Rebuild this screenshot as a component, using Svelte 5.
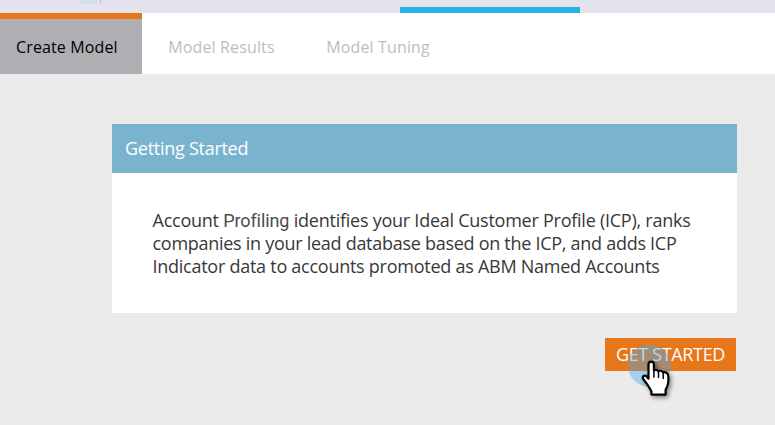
<script>
  const tabs = [
    { label: 'Create Model', active: true },
    { label: 'Model Results', active: false },
    { label: 'Model Tuning', active: false }
  ];
</script>

<div class="page">
  <header class="topbar">
    <span class="fragment"></span>
    <span class="caret"></span>
    <span class="indicator"></span>
  </header>
  <nav class="tabs">
    {#each tabs as tab}
      <a class="tab" class:active={tab.active}>{tab.label}</a>
    {/each}
  </nav>
  <main>
    <section class="card">
      <h2>Getting Started</h2>
      <p>
        <span class="line one">Account <span class="alt">Profiling</span> identifies your Ideal Customer Profile (ICP), ranks</span>
        <span class="line two">companies in your lead database based on the ICP, and adds ICP</span>
        <span class="line three">Indicator data to accounts promoted as ABM Named Accounts</span>
      </p>
    </section>
    <div class="actions">
      <button>GET STARTED</button>
      <span class="halo"></span>
      <svg class="hand" width="32" height="42" viewBox="0 0 32 42">
        <path d="M9.2 2.6C10.9 2.6 11.9 3.8 11.9 5.4V11.4C13.4 10.4 15.8 11 16.4 12.3C18.2 11.4 20.4 12 21.1 13.4C23.4 12.6 25.8 14 26.2 16.6C26.8 20.5 26.3 24.3 25.2 27.4L23.6 30.8V35.6H9.4V32.3L5.8 26.2L1.3 20.2C-.2 17.4 2.4 15.6 4.4 17.2L6.5 19.7V5.4C6.5 3.8 7.5 2.6 9.2 2.6Z" fill="#fff" stroke="#000" stroke-width="2.2" stroke-linejoin="round" />
        <path d="M11.9 11.5V18M16.5 12.6V18.5M21.2 13.8V19.4" fill="none" stroke="#000" stroke-width="1.5" stroke-linecap="round" />
      </svg>
    </div>
  </main>
</div>

<style>
  :global(body) {
    margin: 0;
  }
  .page {
    width: 775px;
    height: 425px;
    overflow: hidden;
    display: flex;
    flex-direction: column;
    background: #ebebeb;
    font-family: "Open Sans", "Noto Sans", sans-serif;
  }
  .topbar {
    height: 13px;
    flex: none;
    display: flex;
    align-items: flex-start;
    background: #e4e2ec;
  }
  .fragment {
    width: 19px;
    height: 4px;
    margin-left: 79px;
    background: #d1dff0;
  }
  .caret {
    width: 1px;
    height: 4px;
    margin-left: 2px;
    background: #a9c7ea;
  }
  .indicator {
    width: 180px;
    height: 6px;
    margin: 7px 0 0 299px;
    background: #24b2e3;
  }
  .tabs {
    height: 61px;
    flex: none;
    display: flex;
    background: #fff;
  }
  .tab {
    box-sizing: border-box;
    height: 61px;
    padding: 6px 0 0 26.3px;
    width: 158px;
    font-size: 16px;
    line-height: 56px;
    letter-spacing: 0.13px;
    color: #c8b9b9;
    white-space: nowrap;
  }
  .tab.active {
    width: 142px;
    padding: 0 0 0 16px;
    border-top: 6px solid #e8761a;
    background: #afaeb3;
    color: #000;
  }
  main {
    padding: 50px 38px 0 112px;
  }
  .card {
    height: 189px;
    background: #fff;
  }
  h2 {
    margin: 0;
    height: 49px;
    padding-left: 13px;
    background: #7ab3cd;
    color: #fff;
    font-size: 18px;
    font-weight: 400;
    line-height: 49px;
    letter-spacing: -0.27px;
  }
  p {
    margin: 0;
    padding: 36px 0 0 40.5px;
    font-size: 18px;
    line-height: 23px;
    color: #383838;
  }
  .line {
    display: block;
    white-space: nowrap;
  }
  .one {
    letter-spacing: -0.25px;
  }
  .two {
    letter-spacing: -0.28px;
  }
  .three {
    letter-spacing: -0.26px;
  }
  .alt {
    font-family: Roboto, sans-serif;
    color: #4c4c4c;
    letter-spacing: -0.08px;
  }
  .actions {
    position: relative;
    display: flex;
    justify-content: flex-end;
    padding: 25px 1px 0 0;
  }
  button {
    width: 131px;
    height: 33px;
    padding: 0;
    border: 0;
    background: #e8761a;
    color: #fff;
    font: 18px/33px "Open Sans", "Noto Sans", sans-serif;
    letter-spacing: -0.35px;
    white-space: nowrap;
  }
  .halo {
    position: absolute;
    left: 516px;
    top: 31px;
    width: 43px;
    height: 43px;
    border-radius: 50%;
    background: rgba(70, 170, 233, 0.42);
  }
  .hand {
    position: absolute;
    left: 529.5px;
    top: 46px;
    overflow: visible;
    filter: drop-shadow(2px 2px 2px rgba(0, 0, 0, 0.45));
  }
</style>
